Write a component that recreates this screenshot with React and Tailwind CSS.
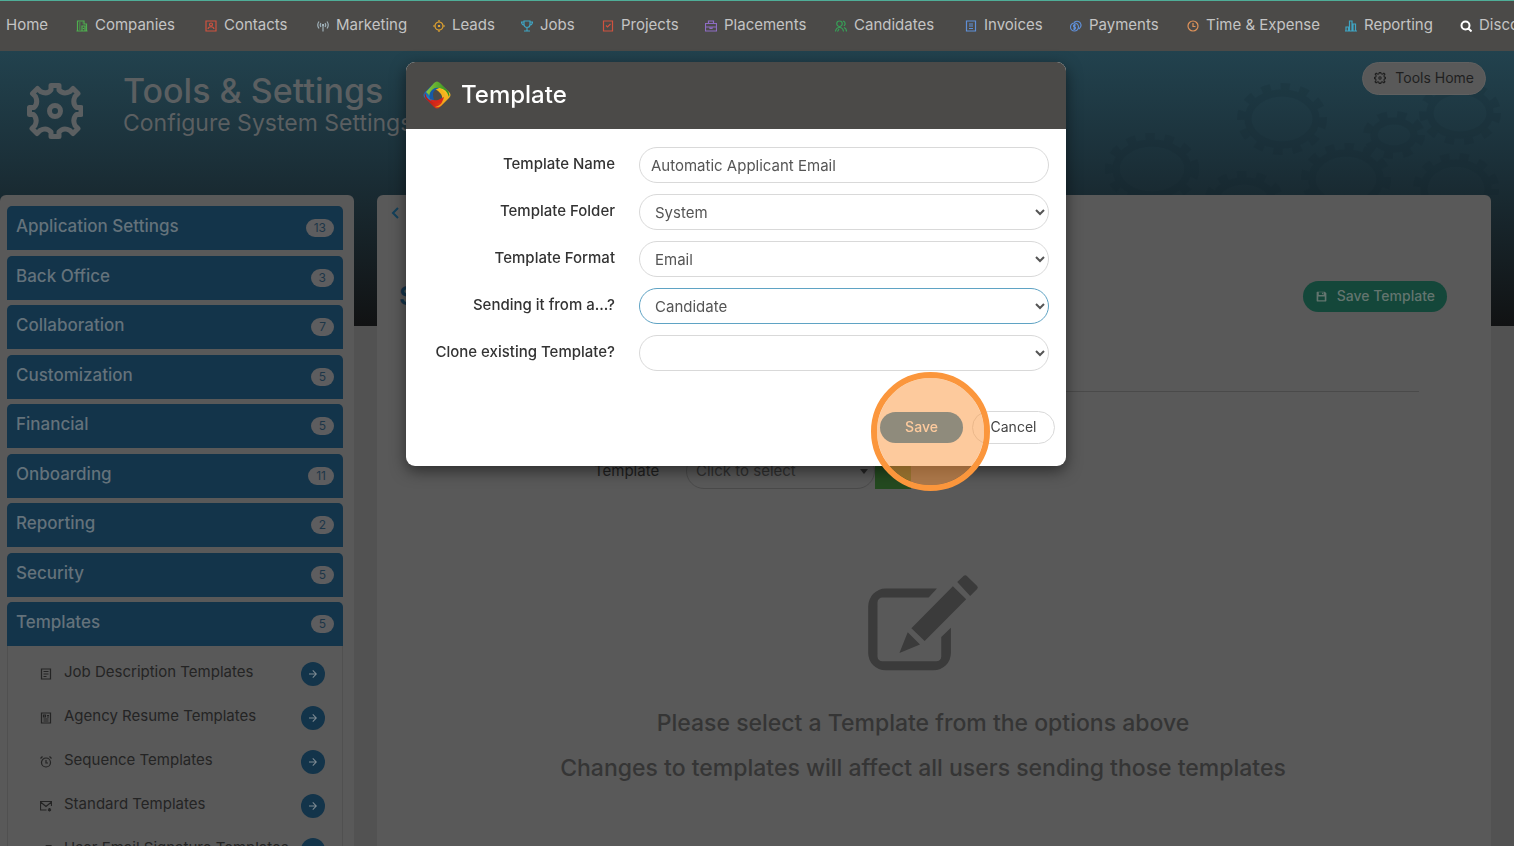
import React from 'react';
import { RiSave3Fill, RiArrowRightLine } from 'react-icons/ri';

// 24x24 line icons
const iconPaths = {
  building: 'M3 2h13v6h5v14H3zM1 22h22M6 6h3M6 10h3M6 14h3M6 18h3M12 6h1M12 22V12h6v10M15 16v2',
  contact: 'M2 2h20v20H2zM6 18c1-6 11-6 12 0M12 6a3 3 0 1 0 0 6 3 3 0 0 0 0-6',
  antenna: 'M4 3q-5 7 0 14M8 6q-3 4 0 8M20 3q5 7 0 14M16 6q3 4 0 8M12 9v14M11 9h2v2h-2z',
  target: 'M12 4a8 8 0 1 0 0 16 8 8 0 0 0 0-16M12 0v5M12 19v5M0 12h5M19 12h5M11 11h2v2h-2z',
  trophy: 'M6 2h12v7a6 6 0 0 1-12 0zM6 4H1q0 6 6 7M18 4h5q0 6-6 7M12 15v6M6 22h12',
  check: 'M3 2h18v20H3zM8 11l3 3 6-6',
  briefcase: 'M1 7h22v15H1zM7 7V2h10v5M1 14h22M10 14v3h4v-3',
  group: 'M9 2a5 5 0 1 0 0 11A5 5 0 0 0 9 2M1 23q1-8 8-8t8 8M5 23l3-5M16 2q5 1 4 7l-2 3M18 15q5 2 5 8',
  invoice: 'M3 2h18v20H3zM8 8h8M8 12h8M8 17h8',
  coins: 'M9 6a8 8 0 1 0 0 16A8 8 0 0 0 9 6M8 5q6-5 12 0 5 7-2 13M12 10H8q-2 2 0 4h2q2 2 0 4H6M9 8v12',
  clock: 'M12 2a10 10 0 1 0 0 20 10 10 0 0 0 0-20M12 6v7h5',
  chart: 'M2 14h5v8H2zM9 2h5v20H9zM16 8h5v14h-5zM0 22h24',
  search: 'M11 3a8 8 0 1 0 0 16 8 8 0 0 0 0-16M17 17l6 6',
  article: 'M3 2h18v20H3zM7 7h10M7 12h10M7 17h6',
  resume: 'M3 2h18v20H3zM7 6h4v4H7zM14 7h4M14 10h4M7 14h10M7 18h10',
  alarm: 'M12 4a9 9 0 1 0 0 18 9 9 0 0 0 0-18M12 8v6h4M1 5l4-4M23 5l-4-4',
  mail: 'M13 20H1V3h22v9M1 4l11 9L23 4M19 16v7M16 18l6 3M22 18l-6 3',
  tag: 'M4 22V12l9-9h9v8M9 14l3-3',
};

const navItems = [
  { label: 'Home' },
  { label: 'Companies', icon: 'building', color: 'text-[#4fae4f]' },
  { label: 'Contacts', icon: 'contact', color: 'text-[#d0523f]' },
  { label: 'Marketing', icon: 'antenna', color: 'text-[#9fb0b8]' },
  { label: 'Leads', icon: 'target', color: 'text-[#e5a52e]' },
  { label: 'Jobs', icon: 'trophy', color: 'text-[#3fa5c4]' },
  { label: 'Projects', icon: 'check', color: 'text-[#d0523f]' },
  { label: 'Placements', icon: 'briefcase', color: 'text-[#8e6cc4]' },
  { label: 'Candidates', icon: 'group', color: 'text-[#37a057]' },
  { label: 'Invoices', icon: 'invoice', color: 'text-[#5f8fd8]' },
  { label: 'Payments', icon: 'coins', color: 'text-[#5f8fd8]' },
  { label: 'Time & Expense', icon: 'clock', color: 'text-[#e0935a]' },
  { label: 'Reporting', icon: 'chart', color: 'text-[#3fa5c4]' },
  { label: 'Discover', icon: 'search', color: 'text-white' },
];

const sections = [
  { label: 'Application Settings', count: 13 },
  { label: 'Back Office', count: 3 },
  { label: 'Collaboration', count: 7 },
  { label: 'Customization', count: 5 },
  { label: 'Financial', count: 5 },
  { label: 'Onboarding', count: 11 },
  { label: 'Reporting', count: 2 },
  { label: 'Security', count: 5 },
  { label: 'Templates', count: 5 },
];

const templateLinks = [
  { label: 'Job Description Templates', icon: 'article' },
  { label: 'Agency Resume Templates', icon: 'resume' },
  { label: 'Sequence Templates', icon: 'alarm' },
  { label: 'Standard Templates', icon: 'mail' },
  { label: 'User Email Signature Templates', icon: 'tag' },
];

const selectFields = [
  { id: 'folder', label: 'Template Folder', value: 'System', border: 'border-[#d9d9d9]' },
  { id: 'format', label: 'Template Format', value: 'Email', border: 'border-[#d9d9d9]' },
  { id: 'source', label: 'Sending it from a...?', value: 'Candidate', border: 'border-[#5fa3c4]' },
  { id: 'clone', label: 'Clone existing Template?', value: '', border: 'border-[#d9d9d9]' },
];

const LineIcon = ({ name, className }) => (
  <svg viewBox="0 0 24 24" className={className} fill="none" stroke="currentColor" strokeWidth={name === 'search' ? 4 : 2.4}>
    <path d={iconPaths[name]} />
  </svg>
);

const GearIcon = ({ className }) => (
  <svg viewBox="0 0 56 56" className={className} fill="none" stroke="currentColor" strokeWidth="5" strokeLinejoin="round">
    <path d="M24 2.500h8v4.500q4.500 5 11 1.500l3-3 5 5-3 3q-3 6.500 1.500 11h4.500v7h-4.500q-4.500 4.500-1.500 11l3 3-5 5-3-3q-6.500-3.500-11 1.500v4.500h-8v-4.500q-4.500-5-11-1.500l-3 3-5-5 3-3q3-6.500-1.500-11H2.500v-7h4.500q4.500-4.500 1.500-11l-3-3 5-5 3 3q6.500 3.500 10.500-1.500z" />
    <circle cx="28" cy="28" r="5.500" />
  </svg>
);

const LogoIcon = () => {
  const petal = 'M3 11L11 2q3-3 6 0l8 8q2 3 1 6-2-8-10-9-8 0-9 8z';
  return (
    <svg viewBox="0 0 28 28" className="h-7 w-7">
      <defs>
        <linearGradient id="green"><stop stopColor="#8cc63f" /><stop offset="1" stopColor="#2f8f1e" /></linearGradient>
        <linearGradient id="yellow"><stop stopColor="#fcd02c" /><stop offset="1" stopColor="#ee9a18" /></linearGradient>
        <linearGradient id="red"><stop stopColor="#f0441e" /><stop offset="1" stopColor="#b81414" /></linearGradient>
        <linearGradient id="blue"><stop stopColor="#2aa0dc" /><stop offset="1" stopColor="#0f3f94" /></linearGradient>
      </defs>
      <circle cx="14" cy="14" r="8" fill="none" stroke="#1f5a8c" strokeWidth="5" />
      <path d={petal} fill="url(#blue)" transform="rotate(-90 14 14)" />
      <path d={petal} fill="url(#red)" transform="rotate(180 14 14)" />
      <path d={petal} fill="url(#yellow)" transform="rotate(90 14 14)" />
      <path d={petal} fill="url(#green)" />
      <path d="M14 7q7 0 8 7 0 5-3 7 1-5-1-8-2-3-6-5z" fill="#f5b21c" />
      <path d="M21 16q-1 6-7 6-5 0-7-4 4 2 8 1z" fill="#d8261c" />
      <path d="M7 18q-2-5 2-9 3-3 7-2-6 2-6 6 0 3 1 6z" fill="#1559a8" />
    </svg>
  );
};

const EditIcon = () => (
  <svg viewBox="0 0 336 292" className="h-[97px] w-28" fill="#3b3b3b">
    <path d="M210 44H55a52 54 0 0 0-52 54v140a52 52 0 0 0 52 52h145a52 52 0 0 0 52-52v-76l-29 28v58a15 15 0 0 1-15 15H46a15 15 0 0 1-15-15V86a15 15 0 0 1 15-15h139z" />
    <path d="M258 37l40 39-125 126-40-39zM271 24l19-18q5-4 10 0l31 30q4 5 0 9l-21 21zM122 175l37 37-62 26z" />
  </svg>
);

const Cog = ({ cx, cy, rx, ry }) => (
  <g fill="none" stroke="#10222b">
    <ellipse cx={cx} cy={cy} rx={rx} ry={ry} strokeWidth="7" />
    <ellipse cx={cx} cy={cy} rx={rx + 7} ry={ry + 6} strokeWidth="8" strokeDasharray="9 10" />
  </g>
);

const App = () => {
  return (
    <div className="h-screen w-full overflow-hidden bg-[#525252] font-['Inter','Noto_Sans',sans-serif]">
      <nav className="h-[51px] overflow-hidden border-t border-[#4fae98] bg-[#4b4a48] pl-[6px]">
        <ul className="grid h-[49px] grid-cols-[70px_129px_112px_116px_88px_81px_103px_130px_130px_105px_117px_158px_115px_100px] items-center">
          {navItems.map(({ label, icon, color }) => (
            <li key={label}>
              <a href="#" className="flex items-center gap-[7px] text-[15px] whitespace-nowrap text-[#c4c4c4]">
                {icon && <LineIcon name={icon} className={`h-3 w-3 shrink-0 ${color}`} />}
                {label}
              </a>
            </li>
          ))}
        </ul>
      </nav>

      <div className="relative min-h-full bg-[linear-gradient(#22424e,#1b3039_40%,#111213)] bg-[length:100%_275px] bg-no-repeat">
        <svg viewBox="0 0 454 144" className="absolute top-0 right-0 h-36 w-[454px] opacity-15">
          <Cog cx={222} cy={68} rx={34} ry={26} />
          <Cog cx={334} cy={84} rx={20} ry={14} />
          <Cog cx={400} cy={62} rx={30} ry={22} />
          <Cog cx={92} cy={118} rx={36} ry={26} />
          <Cog cx={286} cy={128} rx={34} ry={26} />
          <Cog cx={396} cy={138} rx={32} ry={26} />
          <Cog cx={184} cy={148} rx={28} ry={18} />
        </svg>

        <header className="relative flex h-36 items-start justify-between pr-7 pl-[27px]">
          <div className="flex items-start text-[#5b5f61]">
            <GearIcon className="mt-8 h-14 w-14" />
            <div className="ml-10 pt-5">
              <h1 className="text-[34px] leading-10 font-medium">Tools &amp; Settings</h1>
              <p className="text-[23px] leading-6">Configure System Settings</p>
            </div>
          </div>
          <a href="#" className="mt-[11px] flex h-[33px] items-center gap-[9px] rounded-full border border-[#606060] bg-[#595959] px-[11px] pb-[2px] text-sm text-[#1f1f1f]">
            <GearIcon className="h-3 w-3" />
            Tools Home
          </a>
        </header>

        <div className="relative flex items-stretch gap-[23px] pr-[23px]">
          <aside className="w-[354px] shrink-0 rounded-t-md bg-[#595959] pt-[11px] pr-[11px] pl-[7px]">
            {sections.map(({ label, count }) => (
              <button
                key={label}
                className="flex h-11 w-full items-center justify-between rounded-t-[5px] bg-[#13344a] px-[9px] text-left odd:mb-[6px] even:mb-[5px] last-of-type:mb-0"
              >
                <span className="pb-[3px] text-[17px] font-medium text-[#64727b]">{label}</span>
                <span className="rounded-full bg-[#5d5d5f] px-2 text-xs leading-[18px] text-[#1d3648]">{count}</span>
              </button>
            ))}
            <ul className="border-x border-[#505050] pt-[6px]">
              {templateLinks.map(({ label, icon }) => (
                <li key={label}>
                  <a href="#" className="flex h-11 items-center pr-[17px] pb-px pl-8 text-[15px] text-[#242424]">
                    <LineIcon name={icon} className="mr-3 h-3 w-3 shrink-0" />
                    <span className="flex-1 pb-[2px] whitespace-nowrap">{label}</span>
                    <span className="flex h-6 w-6 items-center justify-center rounded-full bg-[#13344a] text-[#7d8a92]">
                      <RiArrowRightLine className="h-3 w-3" />
                    </span>
                  </a>
                </li>
              ))}
            </ul>
          </aside>

          <main className="min-w-0 flex-1 rounded-t-md bg-[#595959] pr-11 pl-[22px]">
            <button aria-label="Back" className="-ml-2 block pt-3 text-[#13405a]">
              <svg viewBox="0 0 8 12" className="h-3 w-2" fill="none" stroke="currentColor" strokeWidth="2">
                <path d="M7 1L2 6l5 5" />
              </svg>
            </button>
            <div className="mt-[61px] flex items-center justify-between">
              <h2 className="text-[26px] leading-8 font-semibold text-[#13344a]">Standard Templates</h2>
              <button className="flex h-[31px] items-center gap-[9px] rounded-full bg-[#14473a] px-3 text-sm font-medium text-[#63756f]">
                <RiSave3Fill className="h-[13px] w-[13px]" />
                Save Template
              </button>
            </div>
            <hr className="mx-7 mt-[79px] border-[#4a4a4a]" />
            <div className="mt-[61px] flex items-center pl-[195px]">
              <label htmlFor="template" className="w-[92px] text-[15px] text-[#1f1f1f]">Template</label>
              <div className="relative">
                <select id="template" className="h-9 w-[189px] appearance-none rounded-full border border-[#4a4a4a] pl-[9px] text-[15px] text-[#303030]">
                  <option>Click to select</option>
                </select>
                <svg viewBox="0 0 8 5" className="pointer-events-none absolute top-4 right-[7px] h-[5px] w-2" fill="#262626">
                  <path d="M0 0h8L4 5z" />
                </svg>
              </div>
              <button aria-label="Add template" className="h-9 w-9 bg-[#244a20]" />
            </div>
            <div className="mt-[85px] flex flex-col items-center text-[23px] leading-[45px] font-medium text-[#353535]">
              <EditIcon />
              <p className="mt-[30px]">Please select a Template from the options above</p>
              <p>Changes to templates will affect all users sending those templates</p>
            </div>
          </main>
        </div>
      </div>

      <div className="fixed inset-0 flex items-start justify-center pt-[62px] pr-[42px]">
        <div role="dialog" aria-labelledby="dialog-title" className="relative w-[660px] rounded-[9px] bg-white shadow-[0_5px_15px_rgba(0,0,0,0.5)]">
          <div className="flex h-[67px] items-center gap-[10px] rounded-t-[9px] bg-[#4b4a48] pb-[2px] pl-[17px]">
            <LogoIcon />
            <h2 id="dialog-title" className="text-2xl font-medium text-white">Template</h2>
          </div>
          <form className="flex flex-col gap-[11px] pt-[18px] pr-[17px]">
            <div className="flex">
              <label htmlFor="name" className="w-[209px] text-right text-[15px] leading-[34px] font-medium text-[#333]">Template Name</label>
              <input id="name" type="text" defaultValue="Automatic Applicant Email" className="ml-6 h-9 flex-1 rounded-full border border-[#d9d9d9] px-[11px] text-[15px] text-[#555]" />
            </div>
            {selectFields.map(({ id, label, value, border }) => (
              <div key={id} className="flex">
                <label htmlFor={id} className="w-[209px] text-right text-[15px] leading-[34px] font-medium text-[#333]">{label}</label>
                <select id={id} className={`ml-6 h-9 flex-1 rounded-full border bg-white pl-[11px] text-[15px] text-[#555] ${border}`}>
                  <option>{value}</option>
                </select>
              </div>
            ))}
          </form>
          <div className="flex items-center justify-end gap-[9px] pt-10 pr-[11px] pb-[22px] text-sm">
            <button className="h-[31px] w-[83px] rounded-full bg-[#2380bc] pb-[2px] font-medium text-white">Save</button>
            <button className="h-[33px] w-[83px] rounded-full border border-[#d9d9d9] pb-[2px] text-[#444]">Cancel</button>
          </div>
          {/* click marker */}
          <div className="pointer-events-none absolute top-[310px] left-[465px] h-[119px] w-[119px] rounded-full border-[6px] border-[#fb963c] bg-[#fb963c]/50 bg-clip-padding" />
        </div>
      </div>
    </div>
  );
};

export default App;
